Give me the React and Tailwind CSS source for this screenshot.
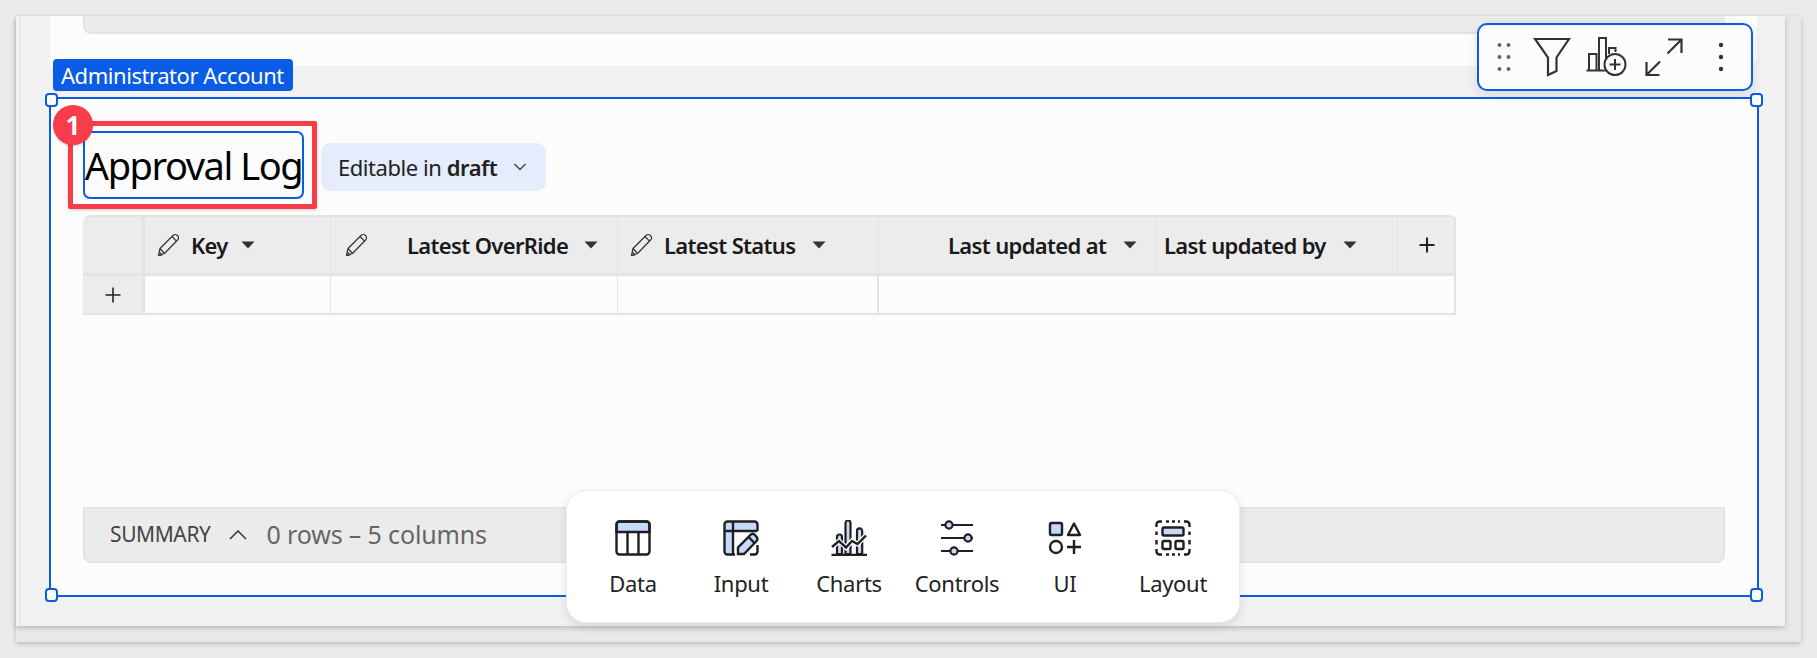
const BLUE = "#c9d9fa";
const DARK = "#1f1f1f";

function Pencil() {
  return (
    <svg width="23" height="24" viewBox="0 0 23 24" fill="none" stroke="#333" strokeWidth="1.2" strokeLinejoin="round" className="shrink-0">
      <path d="M1.5 22.5 L3 15.5 L16.5 2 Q18.5 0.8 20.5 2.5 Q22.3 4.6 21 6.5 L7.5 20.5 Z" />
      <path d="M3 15.5 L7.5 20.5 M15 3.5 L19.5 8.2 M1.5 22.5 L5 21.8 L2.2 19" />
    </svg>
  );
}

function Caret({ className = "" }) {
  return (
    <svg width="14" height="8" viewBox="0 0 14 8" className={`shrink-0 ${className}`}>
      <path d="M0.5 0.5 H13.5 L7 7.5 Z" fill="#333" />
    </svg>
  );
}

function Plus({ size = 16, weight = 1.6 }) {
  return (
    <svg width={size} height={size} viewBox="0 0 16 16" stroke="#222" strokeWidth={weight} className="shrink-0">
      <path d="M8 0.5 V15.5 M0.5 8 H15.5" />
    </svg>
  );
}

function Handle({ className }) {
  return <div className={`absolute w-[13px] h-[14px] rounded-[4px] border-2 border-[#0a5ce6] bg-white ${className}`} />;
}

function HeaderCell({ width, children, className = "" }) {
  return (
    <div style={{ width }} className={`h-full shrink-0 flex items-center border-r border-[#e3e3e3] ${className}`}>
      {children}
    </div>
  );
}

function Label({ children, className = "" }) {
  return <span className={`text-[22px] font-semibold tracking-[-0.65px] text-[#1a1a1a] whitespace-nowrap ${className}`}>{children}</span>;
}

const IconData = () => (
  <svg width="36" height="36" viewBox="0 0 36 36" fill="none" stroke={DARK} strokeWidth="2.4">
    <path d="M1.5 12 V4.5 a3 3 0 0 1 3-3 H31.5 a3 3 0 0 1 3 3 V12 Z" fill={BLUE} />
    <rect x="1.5" y="1.5" width="33" height="33" rx="3" />
    <path d="M12.5 12 V34.5 M23.5 12 V34.5" />
  </svg>
);

const IconInput = () => (
  <svg width="36" height="36" viewBox="0 0 36 36" fill="none" stroke={DARK} strokeWidth="2.4">
    <path d="M1.5 11 V4.5 a3 3 0 0 1 3-3 H31.5 a3 3 0 0 1 3 3 V11 H10 V34.5 H4.5 a3 3 0 0 1-3-3 Z" fill={BLUE} stroke="none" />
    <path d="M12 34.5 H4.5 a3 3 0 0 1-3-3 V4.5 a3 3 0 0 1 3-3 H31.5 a3 3 0 0 1 3 3 V11" />
    <path d="M1.5 11 H34.5 M10 1.5 V34.5" />
    <path d="M34.5 25 V31.5 a3 3 0 0 1-3 3 H27" />
    <path d="M15 34 V27.5 L28 14.5 Q30 13 32 15 L34 17.5 Q35 19.5 33.5 21 L21 34 Z" fill={BLUE} />
    <path d="M25.5 17 L31.5 23" />
  </svg>
);

const IconCharts = () => (
  <svg width="36" height="36" viewBox="0 0 36 36" fill="none" stroke={DARK} strokeWidth="2.2">
    <path d="M6 34 V17 a2.5 2.5 0 0 1 5 0 V34 Z M14.5 34 V3 a2.5 2.5 0 0 1 5 0 V34 Z M26 34 V11 a2.6 2.6 0 0 1 5.2 0 V34 Z" fill={BLUE} />
    <path d="M0.5 35 H36" strokeWidth="2.4" />
    <path d="M1 27 L8 21 L15 27.5 L21 21 L26.5 24 L35 15.5" stroke="#fff" strokeWidth="5" />
    <path d="M1 27 L8 21 L15 27.5 L21 21 L26.5 24 L35 15.5" strokeWidth="2.4" />
  </svg>
);

const IconControls = () => (
  <svg width="36" height="36" viewBox="0 0 36 36" fill="none" stroke={DARK} strokeWidth="2.2">
    <path d="M2 5 H34 M2 18 H34 M2 31 H34" />
    <circle cx="10" cy="5" r="3.6" fill={BLUE} />
    <circle cx="29" cy="18" r="3.6" fill={BLUE} />
    <circle cx="15" cy="31" r="3.6" fill={BLUE} />
  </svg>
);

const IconUI = () => (
  <svg width="36" height="36" viewBox="0 0 36 36" fill="none" stroke={DARK} strokeWidth="2.4">
    <rect x="3" y="3" width="12" height="12" rx="1.5" fill={BLUE} />
    <path d="M27 3.5 L33 15 H21 Z" strokeLinejoin="round" />
    <circle cx="9" cy="27" r="6" />
    <path d="M27 20 V34 M20 27 H34" />
  </svg>
);

const IconLayout = () => (
  <svg width="36" height="36" viewBox="0 0 36 36" fill="none" stroke={DARK} strokeWidth="2.4">
    <path d="M1.5 7 V4.5 a3 3 0 0 1 3-3 H7 M11 1.5 H14 M17 1.5 H20 M23 1.5 H25 M29 1.5 H31.5 a3 3 0 0 1 3 3 V7" />
    <path d="M1.5 11.5 V15 M1.5 20 V24.5 M34.5 11.5 V15 M34.5 20 V24.5" />
    <path d="M1.5 29 V31.5 a3 3 0 0 0 3 3 H7 M11 34.5 H14 M17 34.5 H20 M23 34.5 H25 M29 34.5 H31.5 a3 3 0 0 0 3-3 V29" />
    <rect x="7.5" y="7.5" width="21" height="8" rx="1.5" fill={BLUE} />
    <rect x="7.5" y="21" width="8" height="8" rx="1.5" />
    <rect x="20.5" y="21" width="8" height="8" rx="1.5" />
  </svg>
);

const dock = [
  ["Data", IconData],
  ["Input", IconInput],
  ["Charts", IconCharts],
  ["Controls", IconControls],
  ["UI", IconUI],
  ["Layout", IconLayout],
];

function Toolbar() {
  return (
    <div className="absolute left-[1477px] top-[23px] w-[276px] h-[68px] rounded-[10px] border-2 border-[#0a5ce6] bg-[#fcfcfc] shadow-[0_4px_12px_rgba(0,0,0,0.1)] flex items-center pl-[18px]">
      <svg width="14" height="30" viewBox="0 0 14 30" fill="#666" className="shrink-0">
        <circle cx="2.5" cy="3" r="2" /><circle cx="11.5" cy="3" r="2" />
        <circle cx="2.5" cy="15" r="2" /><circle cx="11.5" cy="15" r="2" />
        <circle cx="2.5" cy="27" r="2" /><circle cx="11.5" cy="27" r="2" />
      </svg>
      <svg width="38" height="40" viewBox="0 0 38 40" fill="none" stroke="#333" strokeWidth="2.2" className="ml-[22px] shrink-0">
        <path d="M2 2 H36 L23.5 20.5 V34 L15 38 V20.5 Z" />
      </svg>
      <svg width="44" height="42" viewBox="0 0 44 42" fill="none" stroke="#333" strokeWidth="2" className="ml-[15px] shrink-0 mt-[2px]">
        <path d="M0.5 33.5 H27 M3 33.5 V17 H10.5 V33.5 M13 33.5 V1 H20 V33.5 M23 17 V11 H29.5 V15" />
        <circle cx="29" cy="27.5" r="10.5" fill="#fcfcfc" />
        <path d="M29 22 V33 M23.5 27.5 H34.5" />
      </svg>
      <svg width="38" height="38" viewBox="0 0 38 38" fill="none" stroke="#333" strokeWidth="2.2" className="ml-[15px] shrink-0">
        <path d="M23 1.5 H36.5 V15 M36.5 1.5 L22.5 15.5 M1.5 24 V37 H14.5 M1.5 37 L15 23.5" />
      </svg>
      <svg width="6" height="30" viewBox="0 0 6 30" fill="#333" className="ml-[35px] shrink-0">
        <circle cx="3" cy="3" r="2.2" /><circle cx="3" cy="15" r="2.2" /><circle cx="3" cy="27" r="2.2" />
      </svg>
    </div>
  );
}

function Dock() {
  return (
    <div className="absolute left-[566px] top-[490px] w-[674px] h-[133px] rounded-[20px] bg-white border border-[#ececec] shadow-[0_4px_10px_rgba(0,0,0,0.1)] flex justify-center pt-[29px]">
      {dock.map(([label, Icon]) => (
        <div key={label} className="w-[108px] flex flex-col items-center">
          <Icon />
          <span className="mt-[13px] text-[22px] leading-[28px] tracking-[-0.3px] text-[#222] whitespace-nowrap">{label}</span>
        </div>
      ))}
    </div>
  );
}

export default function App() {
  return (
    <div className="relative w-[1817px] h-[658px] overflow-hidden bg-[#ebebeb] pt-4 pl-4 font-['Noto_Sans',sans-serif]">
      <div className="w-[1785px] h-[626px] bg-[#e8e8e8] shadow-[0_2px_5px_rgba(0,0,0,0.2)]">
        <div className="w-[1769px] h-[610px] bg-[#f4f4f4] pl-[3px] shadow-[0_2px_5px_rgba(0,0,0,0.2)]">
          <div className="h-full bg-[#f1f1f1] border-l border-[#e2e2e2] pl-[30px]">
            <div className="w-[1707px] h-[50px] bg-[#fcfcfc] pl-[33px] rounded-br-lg">
              <div className="w-[1642px] h-[18px] bg-[#ebebeb] border-b-2 border-l-2 border-[#e3e3e3] rounded-bl-lg" />
            </div>

            <div className="relative mt-[31px] -ml-px w-[1710px] h-[500px] border-2 border-[#0a5ce6] bg-[#fcfcfc] flex flex-col pl-8 pt-8 pb-8">
              <div className="flex items-start">
                <div className="relative w-[221px] h-[68px] rounded-[7px] border-2 border-[#0a5ce6] flex items-center justify-center">
                  <span className="text-[38px] tracking-[-1.45px] text-black whitespace-nowrap">Approval Log</span>
                </div>
                <div className="ml-[17px] mt-3 w-[225px] h-[48px] rounded-[9px] bg-[#e5ecfb] flex items-center pl-[17px]">
                  <span className="text-[22px] tracking-[-0.45px] text-[#222] whitespace-nowrap">Editable in <b className="font-semibold">draft</b></span>
                  <svg width="14" height="8" viewBox="0 0 14 8" fill="none" stroke="#444" strokeWidth="1.4" className="ml-[16px]">
                    <path d="M1.5 1 L7 6.5 L12.5 1" />
                  </svg>
                </div>
              </div>

              <div className="mt-4 w-[1373px] h-[100px] flex flex-col">
                <div className="h-[61px] flex bg-[#ececec] border-t-2 border-b-[3px] border-[#e3e3e3] rounded-tl-lg rounded-tr-lg">
                  <div className="w-[62px] h-full shrink-0 border-r-[3px] border-[#e3e3e3]" />
                  <HeaderCell width={186} className="pl-3">
                    <Pencil />
                    <Label className="ml-[11px]">Key</Label>
                    <Caret className="ml-[13px]" />
                  </HeaderCell>
                  <HeaderCell width={287} className="pl-[14px]">
                    <Pencil />
                    <Label className="ml-[39px]">Latest OverRide</Label>
                    <Caret className="ml-[16px]" />
                  </HeaderCell>
                  <HeaderCell width={261} className="pl-[12px]">
                    <Pencil />
                    <Label className="ml-[11px]">Latest Status</Label>
                    <Caret className="ml-[17px]" />
                  </HeaderCell>
                  <HeaderCell width={277} className="pl-[69px]">
                    <Label>Last updated at</Label>
                    <Caret className="ml-[17px]" />
                  </HeaderCell>
                  <HeaderCell width={242} className="pl-[8px]">
                    <Label>Last updated by</Label>
                    <Caret className="ml-[17px]" />
                  </HeaderCell>
                  <div className="flex-1 flex items-center justify-center border-r-2 border-[#e3e3e3] pl-[2px]">
                    <Plus weight={2} />
                  </div>
                </div>
                <div className="h-[39px] flex border-b-2 border-[#e3e3e3] bg-[#fcfcfc]">
                  <div className="w-[59px] shrink-0 bg-[#ececec] flex items-center justify-center">
                    <Plus />
                  </div>
                  <div className="w-[3px] bg-[#e3e3e3]" />
                  <div className="w-[186px] border-r border-[#e3e3e3]" />
                  <div className="w-[287px] border-r border-[#e3e3e3]" />
                  <div className="w-[261px] border-r-2 border-[#e3e3e3]" />
                  <div className="flex-1 border-r-2 border-[#e3e3e3]" />
                </div>
              </div>

              <div className="mt-auto w-[1642px] h-[56px] bg-[#ebebeb] border-2 border-[#e3e3e3] rounded-b-lg flex items-center pl-[25px]">
                <span className="text-[21px] tracking-[-0.4px] text-[#444] whitespace-nowrap">SUMMARY</span>
                <svg width="18" height="10" viewBox="0 0 18 10" fill="none" stroke="#333" strokeWidth="1.5" className="ml-[18px]">
                  <path d="M1 9 L9 1 L17 9" />
                </svg>
                <span className="ml-[20px] text-[25px] tracking-[-0.15px] text-[#666] whitespace-nowrap">0 rows – 5 columns</span>
              </div>

              <Handle className="-left-[6px] -top-[6px]" />
              <Handle className="-right-[6px] -top-[6px]" />
              <Handle className="-left-[6px] -bottom-[7px]" />
              <Handle className="-right-[6px] -bottom-[7px]" />
            </div>
          </div>
        </div>
      </div>

      <div className="absolute left-[53px] top-[59px] w-[240px] h-[32px] rounded-[4px] bg-[#0a5ce6] flex items-center pl-2">
        <span className="text-[22px] tracking-[-0.45px] text-white whitespace-nowrap">Administrator Account</span>
      </div>

      <div className="absolute left-[68px] top-[121px] w-[249px] h-[88px] rounded-[2px] border-[5px] border-[#f83d4a] shadow-[0_1px_3px_rgba(0,0,0,0.2)]" />
      <div className="absolute left-[53px] top-[105px] w-[40px] h-[40px] rounded-full bg-[#f83d4a] flex items-center justify-center shadow-[0_1px_2px_rgba(0,0,0,0.2)]">
        <span className="text-[26px] font-bold text-white leading-none">1</span>
      </div>

      <Toolbar />
      <Dock />
    </div>
  );
}
